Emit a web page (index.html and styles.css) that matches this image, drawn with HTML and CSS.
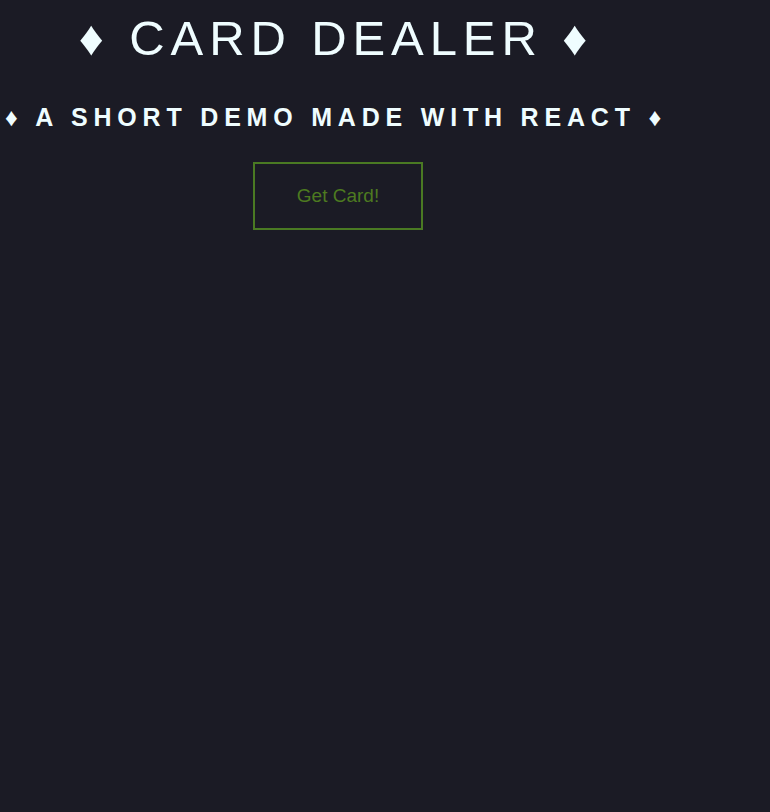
FILE: index.html
```html
<!DOCTYPE html>
<html>
<head>
<meta charset="utf-8">
<link rel="stylesheet" href="styles.css">
</head>
<body>
<div class="app">
  <h1 class="title">♦ CARD DEALER ♦</h1>
  <h2 class="subtitle">♦ A SHORT DEMO MADE WITH REACT ♦</h2>
  <button class="deal">Get Card!</button>
</div>
</body>
</html>
```
FILE: styles.css
```css
html, body {
  margin: 0;
  padding: 0;
  background: #1b1b25;
  height: 100%;
}
.app {
  width: 672px;
  display: flex;
  flex-direction: column;
  align-items: center;
  font-family: "Liberation Sans", sans-serif;
  color: #effdff;
}
.title {
  margin: 10px 0 0;
  font-size: 49px;
  font-weight: 400;
  letter-spacing: 5.9px;
  line-height: 56px;
  white-space: nowrap;
}
.subtitle {
  margin: 35px 0 0;
  font-size: 25px;
  font-weight: 600;
  letter-spacing: 5.8px;
  line-height: 32px;
  white-space: nowrap;
}
.deal {
  margin: 29px 0 0 4px;
  width: 170px;
  height: 68px;
  background: transparent;
  border: 2px solid #4a7a23;
  color: #4d7a20;
  font-family: "Liberation Sans", sans-serif;
  font-size: 19px;
  cursor: pointer;
}
```
